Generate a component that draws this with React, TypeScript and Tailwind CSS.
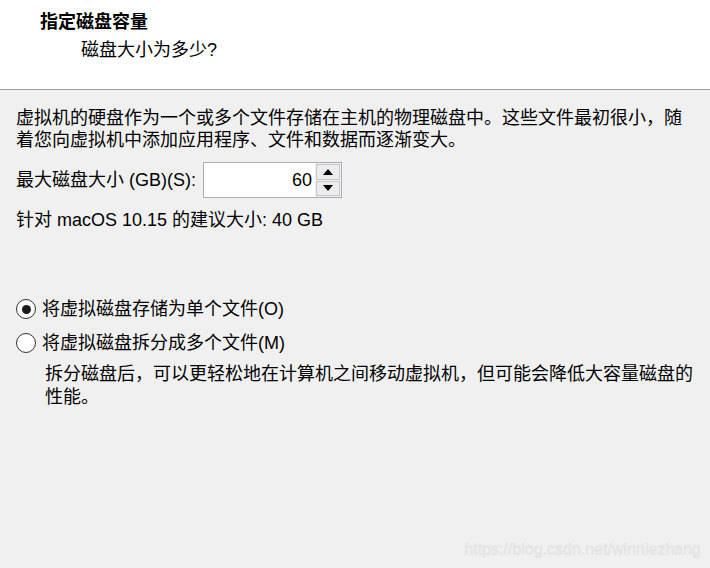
const font = { fontFamily: '"Liberation Sans", "Noto Sans CJK SC", sans-serif' };

function Spinner() {
  return (
    <div className="flex h-full w-[26px] flex-col gap-px bg-[#f0f0f0] p-px">
      <div className="flex flex-1 items-center justify-center border border-[#c8c8c8] bg-[#ececec]">
        <svg width="10" height="6" viewBox="0 0 10 6">
          <path d="M0 6 L5 0 L10 6 Z" fill="#000" />
        </svg>
      </div>
      <div className="flex flex-1 items-center justify-center border border-[#c8c8c8] bg-[#ececec]">
        <svg width="10" height="6" viewBox="0 0 10 6">
          <path d="M0 0 L5 6 L10 0 Z" fill="#000" />
        </svg>
      </div>
    </div>
  );
}

function Radio({ checked, label }: { checked?: boolean; label: string }) {
  return (
    <div className="flex h-[22px] items-center gap-[6px]">
      <span className="flex size-[20px] items-center justify-center rounded-full border-[1.5px] border-[#333] bg-white">
        {checked && <span className="size-[9px] rounded-full bg-[#1a1a1a]" />}
      </span>
      <span>{label}</span>
    </div>
  );
}

export default function App() {
  return (
    <div
      className="relative h-[568px] w-[710px] overflow-hidden bg-[#f0f0f0] text-[18px] leading-[22px] text-black"
      style={font}
    >
      <header className="h-[90px] border-b border-[#a0a0a0] bg-white pt-[11px]">
        <div className="pl-[40px] font-bold">指定磁盘容量</div>
        <div className="mt-[6px] pl-[81px]">磁盘大小为多少?</div>
      </header>

      <main className="px-[16px] pt-[17px]">
        <p>
          虚拟机的硬盘作为一个或多个文件存储在主机的物理磁盘中。这些文件最初很小，随
          <br />
          着您向虚拟机中添加应用程序、文件和数据而逐渐变大。
        </p>

        <div className="mt-[11px] flex h-[36px] items-center gap-[7px]">
          <span>最大磁盘大小 (GB)(S):</span>
          <div className="flex h-[36px] w-[139px] border border-[#abadb3] bg-white">
            <div className="flex flex-1 items-center justify-end pr-[3px]">60</div>
            <Spinner />
          </div>
        </div>

        <div className="mt-[11px]">针对 macOS 10.15 的建议大小: 40 GB</div>

        <div className="mt-[67px] flex flex-col gap-[12px]">
          <Radio checked label="将虚拟磁盘存储为单个文件(O)" />
          <Radio label="将虚拟磁盘拆分成多个文件(M)" />
        </div>

        <p className="mt-[9px] pl-[29px] leading-[23px]">
          拆分磁盘后，可以更轻松地在计算机之间移动虚拟机，但可能会降低大容量磁盘的
          <br />
          性能。
        </p>
      </main>

      <div className="absolute bottom-[8px] right-[9px] text-[16px] text-[#e6e6e6] [text-shadow:0_1px_1px_rgba(0,0,0,0.07)]">
        https://blog.csdn.net/winniezhang
      </div>
    </div>
  );
}
